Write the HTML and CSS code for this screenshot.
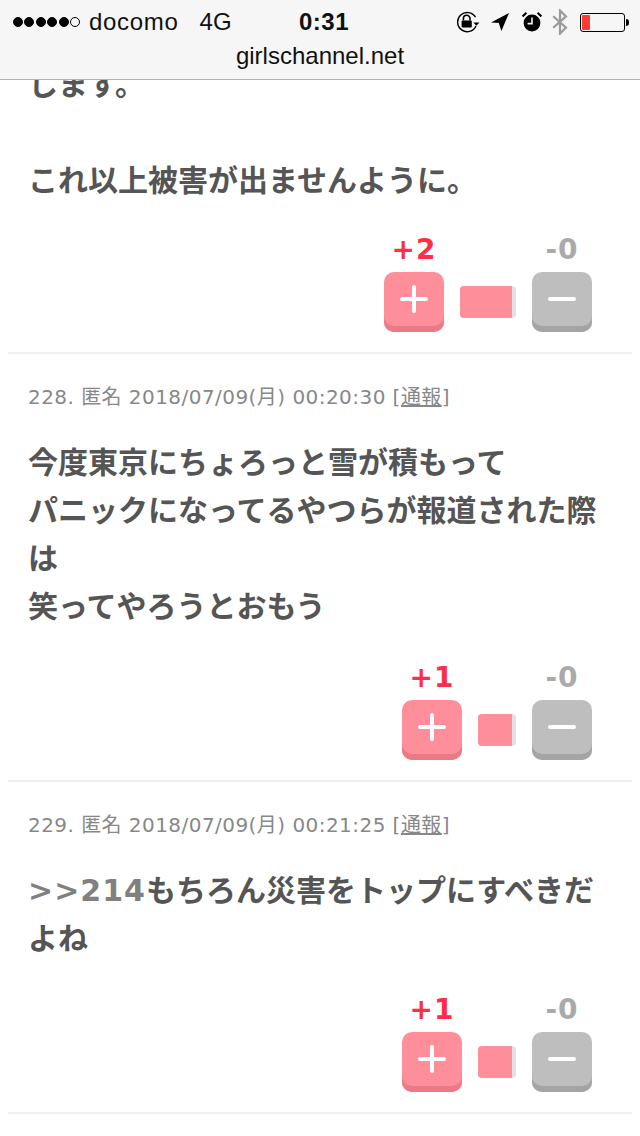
FILE: index.html
```html
<!DOCTYPE html>
<html lang="ja">

<head>
    <meta charset="UTF-8">
    <meta name="viewport" content="width=device-width, initial-scale=1.0">
    <link rel="stylesheet" href="styles.css">
    <title>girlschannel.net</title>
</head>

<body>
<div id="all">
    <!-- browser bar, lies over the scrolled page -->
    <header class="bar">
        <div class="status">
            <div class="status-left">
                <span class="dots"><i></i><i></i><i></i><i></i><i></i><i class="off"></i></span>
                <span class="carrier">docomo</span>
                <span class="network">4G</span>
            </div>
            <div class="time">0:31</div>
            <div class="status-right">
                <svg class="ico-lock" width="24" height="22" viewBox="0 0 24 22">
                    <path d="M19.5 6.2A9.6 9.6 0 1 0 20 15" fill="none" stroke="#000" stroke-width="1.4"/>
                    <path d="M17.4 11.4h6l-3 3.4z" fill="#000"/>
                    <path d="M7.4 9.4V7.6a3.3 3.3 0 0 1 6.6 0v1.8" fill="none" stroke="#000" stroke-width="1.6"/>
                    <rect x="5.6" y="9.4" width="10.2" height="7.2" rx="1" fill="#000"/>
                </svg>
                <svg class="ico-arrow" width="18" height="18" viewBox="0 0 18 18">
                    <path d="M18 0L0 9.4l7.8.6L10.4 18z" fill="#000"/>
                </svg>
                <svg class="ico-alarm" width="20" height="20" viewBox="0 0 20 20">
                    <circle cx="10" cy="11" r="8.4" fill="#000"/>
                    <path d="M10 5.6V11.6H5.6" fill="none" stroke="#f6f6f6" stroke-width="1.6"/>
                    <path d="M.6 4.4L4.4.8M19.4 4.4L15.6.8" stroke="#000" stroke-width="2"/>
                </svg>
                <svg class="ico-bt" width="16" height="26" viewBox="0 0 16 26">
                    <path d="M1.2 7.2L14 18.6 8 24.6V1.4l6 6L1.2 18.8" fill="none" stroke="#9b9b9b" stroke-width="2.2"/>
                </svg>
                <div class="battery"><div class="battery-level"></div></div>
            </div>
        </div>
        <div class="url">girlschannel.net</div>
    </header>

    <main class="list">
        <section class="comment">
            <div class="text">します。<br><br>これ以上被害が出ませんように。</div>
            <div class="vote">
                <div class="vote-col plus">
                    <div class="count">+2</div>
                    <div class="btn"><span class="sign-h"></span><span class="sign-v"></span></div>
                </div>
                <div class="rate"><div class="rate-fill" style="width:52px"></div></div>
                <div class="vote-col minus">
                    <div class="count">-0</div>
                    <div class="btn"><span class="sign-h"></span></div>
                </div>
            </div>
        </section>

        <section class="comment">
            <div class="meta">228. 匿名 2018/07/09(月) 00:20:30 [<a href="#">通報</a>]</div>
            <div class="text">今度東京にちょろっと雪が積もって<br>パニックになってるやつらが報道された際は<br>笑ってやろうとおもう</div>
            <div class="vote">
                <div class="vote-col plus">
                    <div class="count">+1</div>
                    <div class="btn"><span class="sign-h"></span><span class="sign-v"></span></div>
                </div>
                <div class="rate rate-small"><div class="rate-fill" style="width:34px"></div></div>
                <div class="vote-col minus">
                    <div class="count">-0</div>
                    <div class="btn"><span class="sign-h"></span></div>
                </div>
            </div>
        </section>

        <section class="comment">
            <div class="meta">229. 匿名 2018/07/09(月) 00:21:25 [<a href="#">通報</a>]</div>
            <div class="text"><a class="anchor" href="#">&gt;&gt;214</a>もちろん災害をトップにすべきだよね</div>
            <div class="vote">
                <div class="vote-col plus">
                    <div class="count">+1</div>
                    <div class="btn"><span class="sign-h"></span><span class="sign-v"></span></div>
                </div>
                <div class="rate rate-small"><div class="rate-fill" style="width:34px"></div></div>
                <div class="vote-col minus">
                    <div class="count">-0</div>
                    <div class="btn"><span class="sign-h"></span></div>
                </div>
            </div>
        </section>
    </main>
</div>
</body>

</html>
```

FILE: styles.css
```css
* {
    margin: 0;
    padding: 0;
    box-sizing: border-box;
}

body {
    background: #fff;
    font-family: "DejaVu Sans", "Noto Sans CJK JP", sans-serif;
}

#all {
    position: relative;
    width: 640px;
    height: 1136px;
    overflow: hidden;
}

/* browser bar */
.bar {
    position: absolute;
    left: 0;
    top: 0;
    width: 640px;
    height: 80px;
    background: #f6f6f6;
    border-bottom: 1px solid #b2b2b2;
    font-family: "Liberation Sans", sans-serif;
    color: #111;
}

.status {
    display: flex;
    align-items: center;
    height: 42px;
    padding: 2px 11px 0 13px;
    font-size: 24px;
}

.status-left {
    display: flex;
    align-items: center;
    flex: 1;
}

.dots {
    display: flex;
    gap: 1.4px;
    margin-right: 9px;
}

.dots i {
    width: 10px;
    height: 10px;
    border-radius: 50%;
    background: #000;
    border: 1px solid #000;
}

.dots .off {
    background: none;
}

.carrier {
    letter-spacing: 0.7px;
}

.network {
    margin-left: 21px;
}

.time {
    font-weight: bold;
    padding-left: 6px;
    letter-spacing: 0.5px;
}

.status-right {
    display: flex;
    align-items: center;
    justify-content: flex-end;
    flex: 1;
}

.ico-arrow {
    margin-left: 11px;
}

.ico-alarm {
    margin-left: 13px;
}

.ico-bt {
    margin-left: 10px;
}

.battery {
    position: relative;
    width: 45px;
    height: 19px;
    margin-left: 12px;
    margin-right: 4px;
    border: 1px solid #000;
    border-radius: 3px;
    padding: 1px;
}

.battery::after {
    content: "";
    position: absolute;
    left: 45px;
    top: 5px;
    width: 3px;
    height: 7px;
    background: #000;
    border-radius: 0 3px 3px 0;
}

.battery-level {
    width: 8px;
    height: 100%;
    background: #ff3b30;
    border-radius: 1px;
}

.url {
    text-align: center;
    font-size: 24px;
    line-height: 28px;
}

/* comments */
.list {
    padding: 58px 8px 0;
}

.comment {
    border-bottom: 2px solid #f0f0f0;
    padding: 0 0 20px;
}

.comment + .comment {
    padding-top: 29px;
}

.meta {
    padding: 0 20px;
    font-size: 20px;
    line-height: 28px;
    letter-spacing: 0.45px;
    color: #888;
    margin-bottom: 25px;
}

.meta a {
    color: #888;
}

.text {
    padding: 0 20px;
    font-size: 30px;
    line-height: 48px;
    font-weight: bold;
    color: #555;
    font-family: "Noto Sans CJK JP", sans-serif;
}

.anchor {
    color: #808080;
    text-decoration: none;
    font-family: "DejaVu Sans", sans-serif;
    letter-spacing: 1px;
    line-height: 0;
}

.vote {
    display: flex;
    justify-content: flex-end;
    align-items: flex-end;
    gap: 16px;
    padding-right: 40px;
    margin-top: 34px;
}

.comment:first-child .vote {
    margin-top: 32px;
}

.vote-col {
    width: 60px;
}

.count {
    height: 32px;
    line-height: 32px;
    margin-bottom: 6px;
    font-size: 28px;
    font-weight: bold;
    letter-spacing: 1px;
    text-align: center;
    white-space: nowrap;
}

.plus .count {
    color: #ff2d46;
}

.minus .count {
    color: #aaa;
}

.btn {
    position: relative;
    height: 60px;
    border-radius: 10px;
}

.plus .btn {
    background: #ff8e9b;
    box-shadow: inset 0 -6px 0 #ea7a86;
}

.minus .btn {
    background: #bebebe;
    box-shadow: inset 0 -6px 0 #a4a4a4;
}

.sign-h,
.sign-v {
    position: absolute;
    background: #fff;
    border-radius: 2px;
}

.sign-h {
    left: 16px;
    top: 25px;
    width: 28px;
    height: 4px;
}

.sign-v {
    left: 28px;
    top: 13px;
    width: 4px;
    height: 28px;
}

.rate {
    width: 56px;
    height: 32px;
    margin-bottom: 14px;
    background: #e2e2e2;
    border-radius: 4px;
    overflow: hidden;
}

.rate-small {
    width: 38px;
}

.rate-fill {
    height: 100%;
    background: #ff8e9b;
}
```
